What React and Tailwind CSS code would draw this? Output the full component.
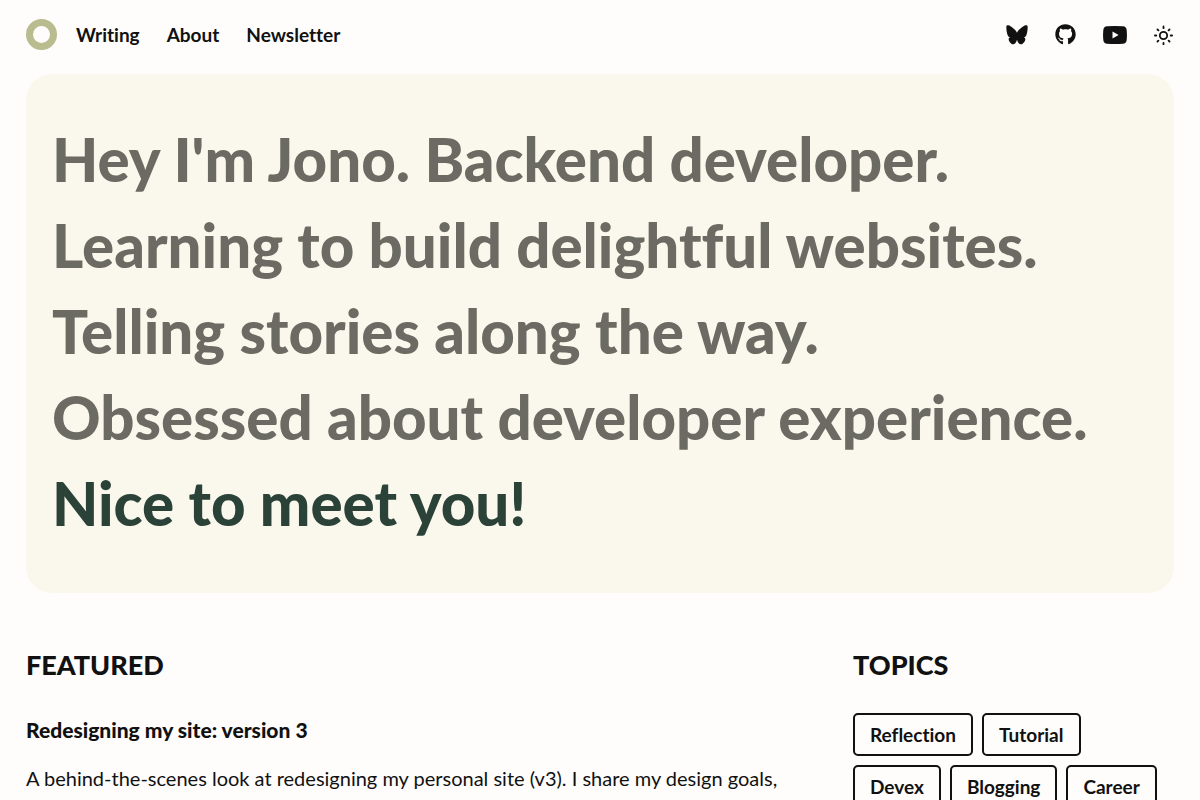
import React from "react";
import { FaGithub } from "react-icons/fa6";

const NAV_LINKS = [
  { label: "Writing", href: "/writing" },
  { label: "About", href: "/about" },
  { label: "Newsletter", href: "/newsletter" },
];

const INTRO_LINES = [
  "Hey I'm Jono. Backend developer.",
  "Learning to build delightful websites.",
  "Telling stories along the way.",
  "Obsessed about developer experience.",
];

const TOPICS = ["Reflection", "Tutorial", "Devex", "Blogging", "Career"];

const BlueskyIcon = () => (
  <svg width="22" height="20" viewBox="-1 -1 66 60" aria-hidden="true">
    <path
      fill="currentColor"
      d="M32 22C26 12 14 2 6 0C2-1 0 1 0 5C0 12 1 22 4 30C6 34 8 35 11 36C7 38 6 42 8 46C11 52 16 57 20 57C26 57 30 50 32 43C34 50 38 57 44 57C48 57 53 52 56 46C58 42 57 38 53 36C56 35 58 34 60 30C63 22 64 12 64 5C64 1 62-1 58 0C50 2 38 12 32 22Z"
    />
  </svg>
);

const YoutubeIcon = () => (
  <svg width="24" height="18" viewBox="0 0 24 18" aria-hidden="true">
    <path
      fill="currentColor"
      fillRule="evenodd"
      d="M4 .3Q12-.3 20 .3Q23.2.5 23.6 3.5Q24.3 9 23.6 14.5Q23.2 17.5 20 17.7Q12 18.3 4 17.7Q.8 17.5.4 14.5Q-.3 9 .4 3.5Q.8.5 4 .3ZM9.5 5.6v6.8L15.6 9Z"
    />
  </svg>
);

const SunIcon = () => (
  <svg width="20" height="20" viewBox="0 0 20 20" fill="none" stroke="currentColor" strokeWidth="1.8" strokeLinecap="round" aria-hidden="true">
    <circle cx="9.5" cy="10.5" r="3.7" />
    <path d="M9.5 1.5v1.7M9.5 17.8v1.7M.9 10.5h1.4M16.7 10.5h1.4M3.5 4.5l.9.9M14.6 15.6l.9.9M3.5 16.5l.9-.9M14.6 5.4l.9-.9" />
  </svg>
);

const Header = () => (
  <header className="flex items-center justify-between py-[19px]">
    <div className="flex items-center gap-[19px]">
      <a href="/" aria-label="Home" className="block size-[31px] rounded-full border-[7px] border-[#b8bc8f]"></a>
      <nav className="flex gap-[27px] text-[19px] leading-[30px] font-bold">
        {NAV_LINKS.map((link) => (
          <a key={link.label} href={link.href}>{link.label}</a>
        ))}
      </nav>
    </div>
    <div className="flex items-center gap-[27px]">
      <a href="#bluesky" aria-label="Bluesky"><BlueskyIcon /></a>
      <a href="#github" aria-label="GitHub"><FaGithub size={21} /></a>
      <a href="#youtube" aria-label="YouTube"><YoutubeIcon /></a>
      <button type="button" aria-label="Toggle theme"><SunIcon /></button>
    </div>
  </header>
);

const Hero = () => (
  <section className="mt-[5px] rounded-[26px] bg-[#faf8ec] px-[26px] pt-[42px] pb-[47px]">
    <h1 className="text-[60px] leading-[86px] font-black text-[#6b6b63]">
      {INTRO_LINES.map((line) => (
        <span key={line} className="block">{line}</span>
      ))}
      <span className="block text-[#2b4238]">Nice to meet you!</span>
    </h1>
  </section>
);

const App = () => {
  return (
    <div className="min-h-screen bg-[#fefdfb] px-[26px] font-['Lato',sans-serif] text-[#111] [font-variant-ligatures:none]">
      <Header />
      <main>
        <Hero />
        <div className="mt-[53px] grid grid-cols-[1fr_321px] gap-10">
          <section>
            <h2 className="text-[27px] leading-[38px] font-black">FEATURED</h2>
            <article className="mt-[30px]">
              <h3 className="text-[21px] leading-[32px] font-black">
                <a href="#redesign">Redesigning my site: version 3</a>
              </h3>
              <p className="mt-4 text-[20px] leading-[32px]">
                A behind-the-scenes look at redesigning my personal site (v3). I share my design goals,
              </p>
            </article>
          </section>
          <section>
            <h2 className="text-[27px] leading-[38px] font-black">TOPICS</h2>
            <ul className="mt-[29px] flex flex-wrap gap-[9px]">
              {TOPICS.map((topic) => (
                <li key={topic}>
                  <a href="#topics" className="block rounded-[5px] border-2 border-[#111] px-[15px] py-1 text-[19px] leading-[31px] font-bold">
                    {topic}
                  </a>
                </li>
              ))}
            </ul>
          </section>
        </div>
      </main>
    </div>
  );
};

export default App;
